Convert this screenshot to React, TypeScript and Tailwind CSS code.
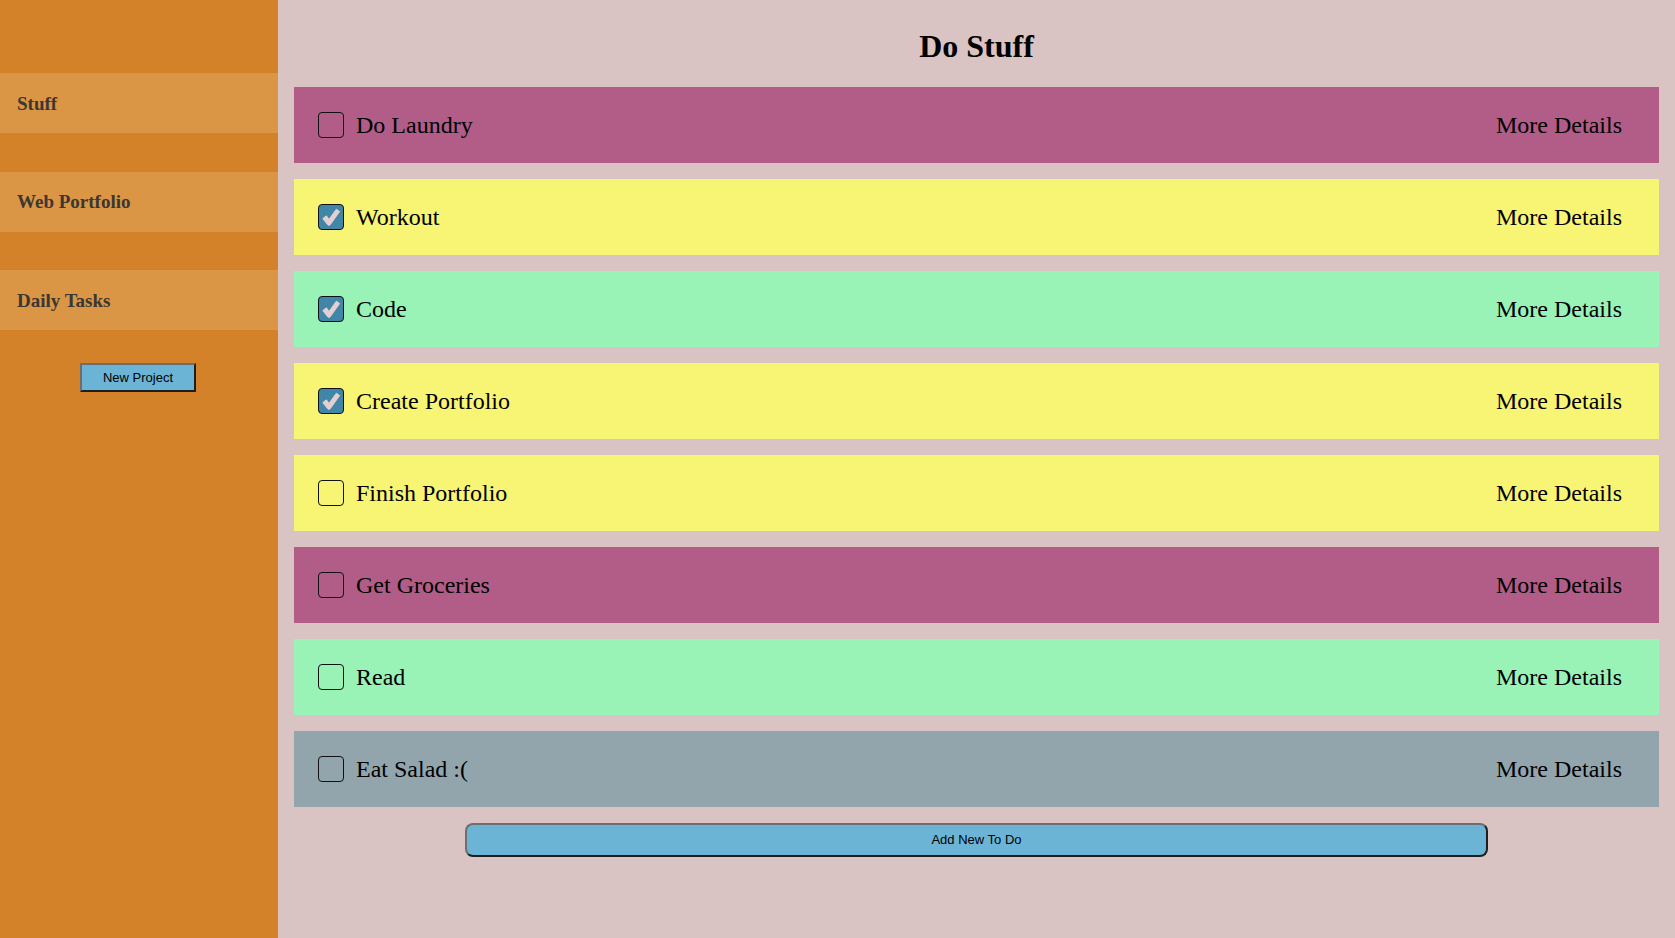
import React, { useState } from 'react';

type Todo = { title: string; done: boolean; color: string };

const projects = ['Stuff', 'Web Portfolio', 'Daily Tasks'];

const initialTodos: Todo[] = [
  { title: 'Do Laundry', done: false, color: 'bg-[#b15d87]' },
  { title: 'Workout', done: true, color: 'bg-[#f8f574]' },
  { title: 'Code', done: true, color: 'bg-[#99f3b7]' },
  { title: 'Create Portfolio', done: true, color: 'bg-[#f8f574]' },
  { title: 'Finish Portfolio', done: false, color: 'bg-[#f8f574]' },
  { title: 'Get Groceries', done: false, color: 'bg-[#b15d87]' },
  { title: 'Read', done: false, color: 'bg-[#99f3b7]' },
  { title: 'Eat Salad :(', done: false, color: 'bg-[#92a5ad]' },
];

const CheckBox = ({ checked, onToggle }: { checked: boolean; onToggle: () => void }) => (
  <button
    onClick={onToggle}
    className={`w-[26px] h-[26px] shrink-0 rounded-[4px] border-[1.5px] border-[#111] flex items-center justify-center ${
      checked ? 'bg-[#4186a9]' : 'bg-transparent'
    }`}
  >
    {checked && (
      <svg width="20" height="20" viewBox="0 0 20 20">
        <path
          d="M1.8 11.6 L5.4 8.8 L8 12.4 L15.4 2.2 L18.6 4.6 L9.2 17.8 C8.5 18.6 7.3 18.6 6.7 17.8 Z"
          fill="#e4d0d0"
          stroke="#e4d0d0"
          strokeWidth="1"
          strokeLinejoin="round"
        />
      </svg>
    )}
  </button>
);

const App = () => {
  const [todos, setTodos] = useState(initialTodos);

  const toggle = (index: number) =>
    setTodos(todos.map((t, i) => (i === index ? { ...t, done: !t.done } : t)));

  return (
    <div className="flex min-h-[938px] w-full font-['Liberation_Serif',serif] text-black">
      {/* Sidebar */}
      <aside className="w-[278px] shrink-0 bg-[#d38229] pt-[73px] flex flex-col">
        <div className="flex flex-col gap-[38.5px]">
          {projects.map((p) => (
            <div key={p} className="h-[60px] bg-[#da9644] flex items-center pl-[17px] pt-[2px]">
              <span className="text-[19px] font-bold text-[#3b3733]">{p}</span>
            </div>
          ))}
        </div>
        <div className="flex justify-center mt-[33px]">
          <button className="w-[116px] h-[29px] bg-[#6bb4d6] border-2 border-t-[#6e6e6e] border-l-[#6e6e6e] border-b-[#1e1e1e] border-r-[#1e1e1e] font-['Liberation_Sans',sans-serif] text-[13px] text-black -ml-[2px]">
            New Project
          </button>
        </div>
      </aside>

      {/* Main */}
      <main className="flex-1 bg-[#d9c4c3] px-[16px] pt-[30px] pb-10">
        <h1 className="text-[32px] font-bold leading-none text-center mb-[25px]">Do Stuff</h1>
        <div className="flex flex-col gap-[16px]">
          {todos.map((todo, i) => (
            <div key={todo.title} className={`h-[76px] ${todo.color} flex items-center pl-[24px] pr-[37px]`}>
              <CheckBox checked={todo.done} onToggle={() => toggle(i)} />
              <span className="ml-[12px] text-[24px] flex-1">{todo.title}</span>
              <span className="text-[24px]">More Details</span>
            </div>
          ))}
        </div>
        <div className="flex justify-center mt-[16px]">
          <button className="w-[75%] h-[34px] bg-[#6bb4d6] rounded-[8px] border-2 border-t-[#6e6e6e] border-l-[#6e6e6e] border-b-[#1e1e1e] border-r-[#1e1e1e] font-['Liberation_Sans',sans-serif] text-[13px] text-black">
            Add New To Do
          </button>
        </div>
      </main>
    </div>
  );
};

export default App;
